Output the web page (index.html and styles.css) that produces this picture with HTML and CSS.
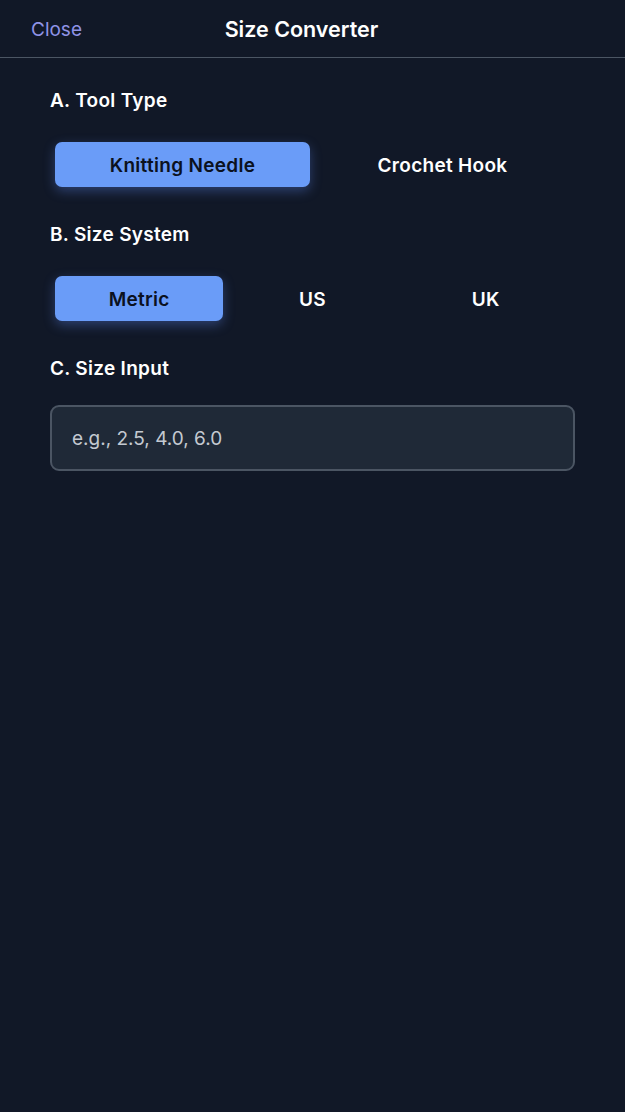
FILE: index.html
```html
<!DOCTYPE html>
<html lang="en">
<head>
<meta charset="utf-8">
<title>Size Converter</title>
<link rel="stylesheet" href="styles.css">
</head>
<body>
<header class="header">
  <button class="close">Close</button>
  <h1 class="title">Size Converter</h1>
  <span class="spacer"></span>
</header>
<main class="content">
  <section class="section">
    <h2 class="label">A. Tool Type</h2>
    <div class="segment two">
      <button class="seg-btn active">Knitting Needle</button>
      <button class="seg-btn">Crochet Hook</button>
    </div>
  </section>
  <section class="section">
    <h2 class="label">B. Size System</h2>
    <div class="segment three">
      <button class="seg-btn active">Metric</button>
      <button class="seg-btn">US</button>
      <button class="seg-btn">UK</button>
    </div>
  </section>
  <section class="section">
    <h2 class="label">C. Size Input</h2>
    <input class="size-input" type="text" placeholder="e.g., 2.5, 4.0, 6.0">
  </section>
</main>
</body>
</html>
```
FILE: styles.css
```css
* { box-sizing: border-box; }
html, body {
  margin: 0;
  padding: 0;
  background: #111827;
  min-height: 100%;
}
body {
  font-family: Inter, "Noto Sans", "Liberation Sans", sans-serif;
  color: #ffffff;
  height: 1112px;
}
.header {
  height: 58px;
  border-bottom: 1px solid #4b5563;
  display: flex;
  align-items: center;
  padding: 1px 31px 0;
}
.close {
  background: none;
  border: none;
  padding: 0;
  font-family: inherit;
  font-size: 19px;
  color: #8f93e6;
  cursor: pointer;
}
.title {
  flex: 1;
  margin: 0;
  text-align: center;
  font-size: 21.5px;
  font-weight: 600;
  color: #ffffff;
}
.spacer { width: 73px; }
.content {
  padding: 30px 50px 0;
  display: flex;
  flex-direction: column;
  gap: 30px;
}
.section {
  display: flex;
  flex-direction: column;
  gap: 25px;
}
.label {
  margin: 0;
  font-size: 19px;
  line-height: 24px;
  font-weight: 600;
  letter-spacing: 0.3px;
  color: #ffffff;
  padding-top: 1px;
}
.segment {
  display: grid;
  gap: 5px;
  padding: 5px;
  border-radius: 10px;
  margin-top: -1px;
}
.segment.two { grid-template-columns: 1fr 1fr; }
.segment.three { grid-template-columns: 1fr 1fr 1fr; }
.seg-btn {
  height: 45px;
  border: none;
  border-radius: 7px;
  background: transparent;
  color: #ffffff;
  font-family: inherit;
  font-size: 19px;
  font-weight: 600;
  letter-spacing: 0.3px;
  padding: 1px 0 0;
  cursor: pointer;
}
.seg-btn.active {
  background: #6a9cf8;
  color: #0b1120;
  box-shadow: 0 4px 12px rgba(96, 140, 250, 0.35);
}
.size-input {
  height: 66px;
  width: 100%;
  background: #1f2937;
  border: 2px solid #4b5563;
  border-radius: 9px;
  padding: 1px 20px 0;
  font-family: inherit;
  font-size: 19px;
  color: #ffffff;
  outline: none;
  margin-top: -1px;
}
.size-input::placeholder {
  color: #c4c9d1;
}
```
